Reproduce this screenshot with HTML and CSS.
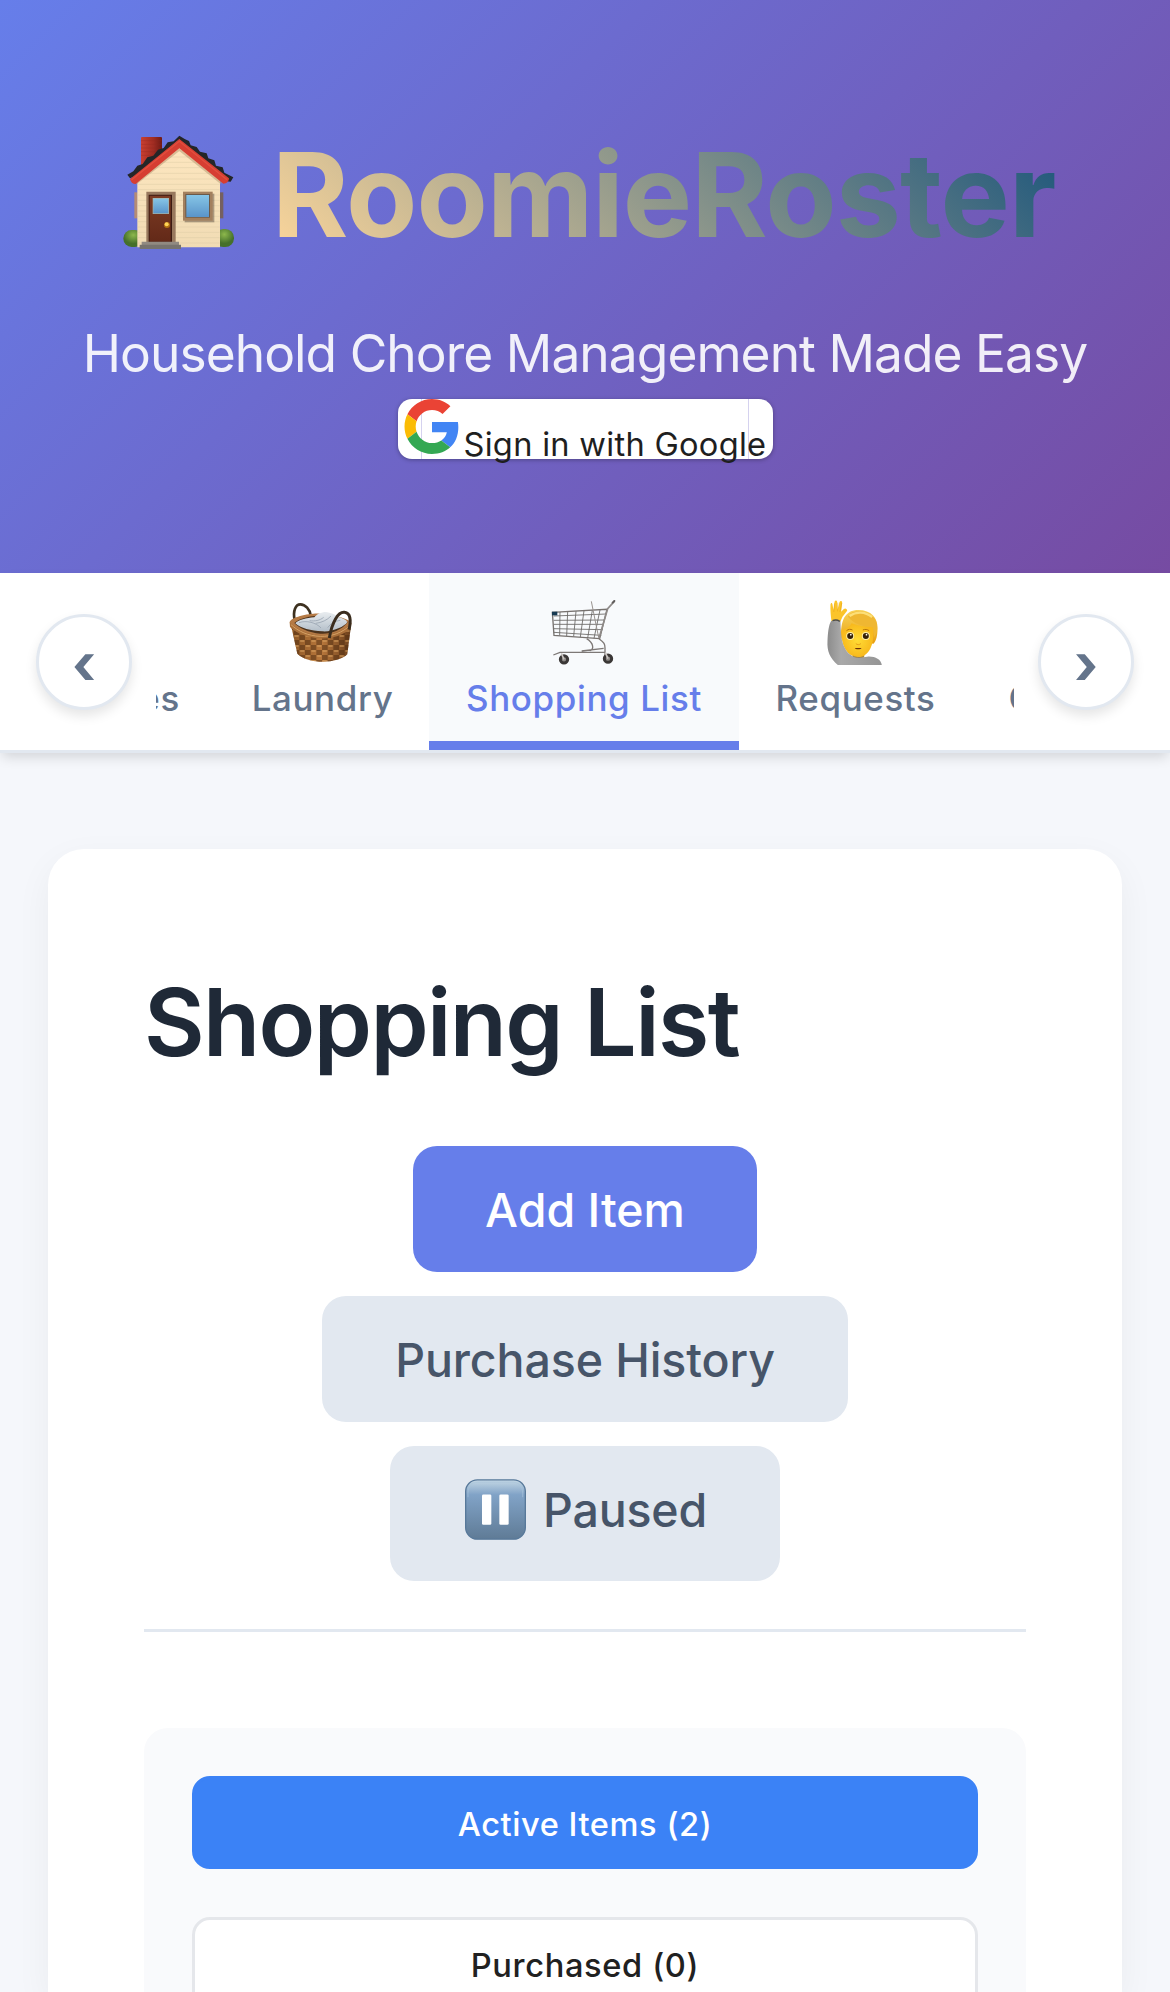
FILE: index.html
```
<!DOCTYPE html>
<html lang="en">
<head>
<meta charset="utf-8">
<title>RoomieRoster</title>
<link rel="stylesheet" href="styles.css">
</head>
<body>
<header class="header">
  <h1 class="brand">
    <svg class="brand-icon" viewBox="66 72 342 348">
      <defs>
        <linearGradient id="chimney"><stop offset="0" stop-color="#c93f31"/><stop offset=".6" stop-color="#a02c22"/><stop offset="1" stop-color="#6f1a14"/></linearGradient>
        <linearGradient id="siding" x2="0" y2="1"><stop offset="0" stop-color="#fde6bf"/><stop offset="1" stop-color="#f1dcb4"/></linearGradient>
        <linearGradient id="glass" x2="0" y2="1"><stop offset="0" stop-color="#86c5e6"/><stop offset="1" stop-color="#5a94c9"/></linearGradient>
        <linearGradient id="door" x2="0" y2="1"><stop offset="0" stop-color="#7d3c24"/><stop offset="1" stop-color="#632918"/></linearGradient>
        <radialGradient id="bush" cy=".3"><stop offset="0" stop-color="#8db84c"/><stop offset="1" stop-color="#45702b"/></radialGradient>
      </defs>
      <rect x="123" y="81" width="63" height="90" rx="3" fill="url(#chimney)"/>
      <path d="M123 92h63M123 103h63M123 114h63M123 125h63M123 136h63" stroke="#8e281f" stroke-width="1.5" opacity=".6"/>
      <path d="M103 247h10v78h-10z" fill="#b58c74"/><path d="M360 247h10v78h-10z" fill="#75605f"/>
      <rect x="70" y="360" width="60" height="51" rx="25" fill="url(#bush)"/>
      <rect x="344" y="357" width="58" height="54" rx="26" fill="url(#bush)"/>
      <path d="M112 205L238 104l122 101v207H112z" fill="url(#siding)"/>
      <path d="M205 141h66M184 157h108M164 173h148M144 190h188M124 207h226M113 223h246M113 239h246M113 255h246M113 271h246M113 287h246M113 303h246M113 319h246M113 335h246M113 351h246M113 367h246M113 383h246M113 399h246" stroke="#dccaa5" stroke-width="1.5"/>
      <path d="M108 220L238 119l126 100" fill="none" stroke="#b99b74" stroke-width="7" opacity=".55"/>
      <path d="M82 194l18-10 12-17 16-5 14-20 18-5 14-18 17-5 12-17 18-3 17-17 16 10 13 6 5 13 18 5 10 14 20 5 5 15 18 6 5 16 20 5 5 16 27 14-8 13-18-2L238 88 112 196l-22 9z" fill="#242628"/>
      <path d="M90 207L238 87l149 118c0 9-7 16-17 16L238 115 107 222c-9 0-15-6-17-15z" fill="#d63e32"/>
      <path d="M94 210L238 94l143 115" fill="none" stroke="#e24f3e" stroke-width="4"/>
      <path d="M139 245h88v154h-88z" fill="#98785d"/><path d="M146 254h70v143h-70z" fill="#3d1b12"/>
      <path d="M149 257h63v138h-63z" fill="url(#door)"/><path d="M158 264h49v48h-49z" fill="#a8b4a5"/><path d="M160 266h45v44h-45z" fill="url(#glass)"/>
      <circle cx="201" cy="345" r="9" fill="#b37113"/><circle cx="200" cy="343" r="6" fill="#ffd457"/>
      <path d="M254 251h89v86h-89z" fill="#554439" opacity=".45"/><path d="M249 245h89v87h-89z" fill="#a3805e"/><path d="M256 252h74v71h-74z" fill="#6b5949"/><path d="M259 255h68v66h-68z" fill="url(#glass)"/>
      <path d="M125 395h112v10H125z" fill="#918a82"/><path d="M119 404h124v13H119z" fill="#77736e"/>
    </svg>
    <span class="brand-name">RoomieRoster</span>
  </h1>
  <p class="tagline">Household Chore Management Made Easy</p>
  <button class="google">
    <svg class="google-icon" viewBox="0 0 48 48">
      <path fill="#EA4335" d="M24 9.5c3.54 0 6.71 1.22 9.21 3.6l6.85-6.85C35.9 2.38 30.47 0 24 0 14.62 0 6.51 5.38 2.56 13.22l7.98 6.19C12.43 13.72 17.74 9.5 24 9.5z"/>
      <path fill="#4285F4" d="M46.98 24.55c0-1.57-.15-3.09-.38-4.55H24v9.02h12.94c-.58 2.96-2.26 5.48-4.78 7.18l7.73 6c4.51-4.18 7.09-10.36 7.09-17.65z"/>
      <path fill="#FBBC05" d="M10.53 28.59c-.48-1.45-.76-2.99-.76-4.59s.27-3.14.76-4.59l-7.98-6.19C.92 16.46 0 20.12 0 24c0 3.88.92 7.54 2.56 10.78l7.97-6.19z"/>
      <path fill="#34A853" d="M24 48c6.48 0 11.93-2.13 15.89-5.81l-7.73-6c-2.15 1.45-4.92 2.3-8.16 2.3-6.26 0-11.57-4.22-13.47-9.91l-7.98 6.19C6.51 42.62 14.62 48 24 48z"/>
    </svg>
    <span class="google-text">Sign in with Google</span>
  </button>
</header>

<nav class="nav">
  <button class="scroll">‹</button>
  <div class="tabs">
    <a class="tab tab-first"><span class="tab-icon"></span>Chores</a>
    <a class="tab tab-laundry">
      <svg class="tab-icon" viewBox="867 120 198 198">
        <defs>
          <linearGradient id="wicker"><stop offset="0" stop-color="#8e5826"/><stop offset=".5" stop-color="#b9783c"/><stop offset="1" stop-color="#6d401b"/></linearGradient>
          <pattern id="weave" width="34" height="30" patternUnits="userSpaceOnUse"><path d="M0 0h17v15H0zM17 15h17v15H17z" fill="#4c2a10" opacity=".5"/><path d="M19 3h13M2 18h13" stroke="#dba664" stroke-width="3"/></pattern>
          <linearGradient id="linen" x2="0" y2="1"><stop offset="0" stop-color="#e9edf0"/><stop offset="1" stop-color="#b4bfc9"/></linearGradient>
        </defs>
        <path d="M887 180c-6-28 3-47 17-47 15 0 29 16 31 33" fill="none" stroke="#3d3120" stroke-width="8"/>
        <path d="M872 187c4-16 60-28 90-26 35 2 90 14 95 28l-4 24c-30 20-140 18-176-8z" fill="#b57a45"/>
        <path d="M886 189c12-14 50-22 76-22 30 0 70 6 84 20-18 24-50 36-82 34-34-2-66-18-78-32z" fill="#4c321b"/>
        <path d="M889 190c8-10 34-16 57-18 8-11 30-20 45-14 12 2 20 7 25 12 14 4 25 8 29 16-8 14-45 30-75 28-34-1-66-10-81-24z" fill="url(#linen)"/>
        <path d="M900 188c22-8 52 0 66 16M932 182c15 2 30 0 42-10M950 190c18-2 35-10 46-22M986 203c8-12 22-20 38-22" fill="none" stroke="#9aa5b2" stroke-width="2.5"/>
        <path d="M878 205c35 28 130 34 177 0l-10 78c-30 30-118 30-150-2z" fill="url(#wicker)"/>
        <path d="M878 205c35 28 130 34 177 0l-10 78c-30 30-118 30-150-2z" fill="url(#weave)"/>
        <path d="M872 187c18 18 50 36 90 38 36 2 74-15 95-36l-2 17c-24 20-58 31-92 29-38-2-74-17-90-34z" fill="#a96f39"/>
        <path d="M876 194c22 20 52 34 88 35 36 1 66-12 90-33" fill="none" stroke="#d6a266" stroke-width="3"/>
        <path d="M991 234c8-47 26-80 46-77 17 2 20 23 13 52" fill="none" stroke="#3a2c1d" stroke-width="9"/>
      </svg>
      Laundry
    </a>
    <a class="tab tab-shopping tab-active">
      <svg class="tab-icon" viewBox="453 120 198 198" fill="none">
        <path d="M457 157l164-9-22 88-137-10z" stroke="#77726f" stroke-width="4"/>
        <path d="M461 168l158-6M461 181l154-1M461 193h151M461 206l147 3M461 217l143 9M480 156l-1 70M503 155l-3 73M528 154l-7 75M552 152l-11 79M577 151l-14 83M600 150l-18 85" stroke="#6b6866" stroke-width="2.6"/>
        <path d="M574 124l14 70 8 38" stroke="#99938f" stroke-width="3"/>
        <path d="M597 235l26-89 20-22" stroke="#8f8a88" stroke-width="5"/><path d="M638 128l5-5" stroke="#5f5c5b" stroke-width="6" stroke-linecap="round"/>
        <path d="M560 236c22 14 22 32 10 36M597 236c16 12 18 16 18 28v22M460 285l20-8h134M545 273l66-8" stroke="#7d7876" stroke-width="4"/>
        <path d="M456 155h16v11h-16z" fill="#173a52"/>
        <circle cx="492" cy="298" r="11" stroke="#3b3736" stroke-width="9" fill="#8f8b88"/><circle cx="624" cy="296" r="11" stroke="#3b3736" stroke-width="9" fill="#8f8b88"/>
        <path d="M484 280l8 18M616 278l8 18" stroke="#c9c4c1" stroke-width="5"/>
      </svg>
      Shopping List
    </a>
    <a class="tab tab-requests">
      <svg class="tab-icon" viewBox="127.5 120 198 198">
        <defs>
          <linearGradient id="hair" x2="0" y2="1"><stop offset="0" stop-color="#f9d45a"/><stop offset="1" stop-color="#e89f10"/></linearGradient>
          <radialGradient id="face"><stop offset="0" stop-color="#ffdc35"/><stop offset="1" stop-color="#f8b91c"/></radialGradient>
          <linearGradient id="sleeve"><stop offset="0" stop-color="#8c8c8c"/><stop offset=".25" stop-color="#a9a9a9"/><stop offset="1" stop-color="#959595"/></linearGradient>
        </defs>
        <path d="M182 236c-3-56 12-86 52-86 38 0 58 24 57 55 0 20-3 38-12 46z" fill="url(#hair)"/>
        <path d="M217 270h34v34h-34z" fill="#e8a517"/>
        <path d="M183 210c15-3 24-8 30-20 25 10 50 11 64 10 7 48-10 91-44 91-33 0-53-36-50-81z" fill="url(#face)"/>
        <path d="M202 170c16 20 46 30 76 32l3 30c11-12 12-38 3-54-12-18-30-25-50-24-16 1-27 6-32 16z" fill="#efb732"/>
        <path d="M207 168c20-14 46-14 68 3" fill="none" stroke="#ffe88a" stroke-width="7" opacity=".8"/>
        <circle cx="209" cy="228" r="12" fill="#fff0a8"/><circle cx="256" cy="228" r="12" fill="#fff0a8"/>
        <circle cx="209" cy="228" r="9" fill="#342007"/><circle cx="256" cy="228" r="9" fill="#342007"/><circle cx="211" cy="224" r="2.5" fill="#fff"/><circle cx="258" cy="224" r="2.5" fill="#fff"/>
        <path d="M198 212c6-5 12-5 18-2M247 210c6-3 14-2 19 2" fill="none" stroke="#b87508" stroke-width="3"/>
        <path d="M226 251c5 4 10 4 15 0" fill="none" stroke="#e6a01a" stroke-width="3"/><path d="M223 264h20c-1 5-19 5-20 0z" fill="#6b330a"/>
        <path d="M153 184c-2-16-4-36-3-50 1-7 5-7 6 0l3 16 3-24c2-6 7-6 8 0l1 23 6-23c3-5 8-3 8 2l-3 27 8-8c5-4 10 0 10 5l-14 18-7 16z" fill="#fbc42a"/>
        <path d="M160 156l2-26M171 154l1-26M178 156l6-27" stroke="#e69f16" stroke-width="1.5"/>
        <path d="M152 183c8-3 20-2 28 1 1 25 1 48 7 66 7 20 16 34 33 40 14 5 27 2 40 0 22-2 41 7 44 25H172c-24-20-33-42-31-72 1-22 3-48 11-60z" fill="url(#sleeve)"/>
        <path d="M156 182c7-3 16-2 22 2" fill="none" stroke="#4e4e4e" stroke-width="4"/><path d="M217 288c12 6 26 6 34 0" fill="none" stroke="#7a7263" stroke-width="2"/>
      </svg>
      Requests
    </a>
    <a class="tab tab-last"><span class="tab-icon"></span>Calendar</a>
  </div>
  <button class="scroll">›</button>
</nav>

<main class="main">
  <section class="card">
    <h2 class="title">Shopping List</h2>
    <div class="actions">
      <button class="btn btn-primary">Add Item</button>
      <button class="btn btn-history">Purchase History</button>
      <button class="btn btn-paused">
        <svg class="pause-icon" viewBox="75 146 183 182">
          <defs><linearGradient id="key" x2="0" y2="1"><stop offset="0" stop-color="#c5d8e5"/><stop offset=".25" stop-color="#81a3c7"/><stop offset="1" stop-color="#5f7b96"/></linearGradient></defs>
          <rect x="77" y="148" width="179" height="178" rx="35" fill="url(#key)" stroke="#58799a" stroke-width="4"/>
          <path d="M84 200v-12c0-20 10-33 30-33h104c20 0 30 13 30 33v12" fill="none" stroke="#a9c4db" stroke-width="3" opacity=".6"/>
          <rect x="126" y="192" width="28" height="91" rx="4" fill="#fff"/><rect x="178" y="192" width="28" height="91" rx="4" fill="#fff"/>
        </svg>
        Paused
      </button>
    </div>
    <div class="panel">
      <button class="filter filter-active">Active Items (2)</button>
      <button class="filter">Purchased (0)</button>
    </div>
  </section>
</main>
</body>
</html>
```
FILE: styles.css
```
* { box-sizing: border-box; }
body {
  margin: 0;
  height: 1992px;
  overflow: hidden;
  background: #f5f7fb;
  font-family: Inter, "Noto Sans", sans-serif;
}
button { font-family: inherit; margin: 0; padding: 0; border: 0; }

.header {
  height: 573px;
  padding-top: 123px;
  display: flex;
  flex-direction: column;
  align-items: center;
  background: linear-gradient(135deg, #667eea 0%, #764ba2 100%);
}
.brand {
  margin: 0;
  width: 926px;
  height: 143px;
  display: flex;
  gap: 36px;
  font-size: 116.5px;
  line-height: 143px;
  font-weight: 700;
  letter-spacing: -1px;
}
.brand-icon { width: 114px; height: 116px; margin-top: 11px; flex: none; }
.brand-name {
  background: linear-gradient(45deg, #ffd89b, #19547b);
  -webkit-background-clip: text;
  background-clip: text;
  color: transparent;
}
.tagline {
  margin: 47px 0 0;
  font-size: 51.5px;
  line-height: 80px;
  font-weight: 400;
  letter-spacing: -0.97px;
  color: rgba(255, 255, 255, 0.9);
  white-space: nowrap;
}
.google {
  margin-top: 6px;
  width: 375px;
  height: 60px;
  padding-left: 6px;
  display: flex;
  align-items: flex-start;
  gap: 4px;
  border-radius: 14px;
  background: linear-gradient(90deg, transparent 23px, #d5d2ef 23px 24px, transparent 24px 350px, #d5d2ef 350px 351px, transparent 351px) #fff;
  box-shadow: 0 1px 4px rgba(0, 0, 0, 0.3);
  color: #1f1f1f;
}
.google-icon { width: 56px; height: 55px; flex: none; }
.google-text {
  margin-top: 25px;
  font-size: 32.6px;
  line-height: 40px;
  letter-spacing: 0.29px;
  white-space: nowrap;
}

.nav {
  height: 180px;
  padding: 0 36px;
  display: flex;
  align-items: flex-start;
  gap: 24px;
  background: #fff;
  border-bottom: 3px solid #e2e8f0;
  box-shadow: 0 6px 12px -2px rgba(0, 0, 0, 0.14);
}
.scroll {
  flex: none;
  width: 96px;
  height: 96px;
  margin-top: 41px;
  display: flex;
  align-items: center;
  justify-content: center;
  padding-top: 4px;
  border: 3px solid #e2e8f0;
  border-radius: 50%;
  background: #fff;
  box-shadow: 0 6px 12px rgba(0, 0, 0, 0.1);
  color: #64748b;
  font-size: 56px;
  line-height: 56px;
  font-weight: 700;
}
.tabs { flex: 1; display: flex; overflow: hidden; height: 177px; }
.tab {
  flex: none;
  height: 177px;
  padding-top: 27px;
  display: flex;
  flex-direction: column;
  align-items: center;
  gap: 11px;
  border-bottom: 9px solid transparent;
  color: #64748b;
  font-size: 34.9px;
  line-height: 42px;
  font-weight: 500;
  letter-spacing: 0.65px;
  white-space: nowrap;
}
.tab-icon { display: block; width: 66px; height: 66px; }
.tab-first { width: 192px; margin-left: -132px; padding-right: 4px; }
.tab-laundry { width: 213px; }
.tab-laundry .tab-icon { margin-left: -3px; }
.tab-shopping { width: 310px; }
.tab-requests { width: 233px; }
.tab-last { width: 229px; }
.tab-active { background: #f8fafc; color: #667eea; border-bottom-color: #667eea; }

.main { padding: 96px 48px 0; }
.card {
  height: 1143px;
  padding: 96px 96px 0;
  border-radius: 36px 36px 0 0;
  background: #fff;
  box-shadow: 0 12px 36px rgba(0, 0, 0, 0.05);
}
.title {
  margin: 0 0 46px;
  padding-top: 1px;
  font-size: 93.3px;
  line-height: 154px;
  font-weight: 600;
  letter-spacing: -1.6px;
  color: #1f2937;
}
.actions {
  display: flex;
  flex-direction: column;
  align-items: center;
  gap: 24px;
  padding-bottom: 48px;
  border-bottom: 3px solid #e2e8f0;
}
.btn {
  height: 126px;
  padding-top: 2px;
  display: flex;
  align-items: center;
  justify-content: center;
  border-radius: 24px;
  background: #e2e8f0;
  color: #475569;
  font-size: 46.5px;
  font-weight: 500;
}
.btn-primary { width: 344px; background: #667eea; color: #fff; }
.btn-history { width: 526px; letter-spacing: -0.1px; }
.btn-paused { width: 390px; height: 135px; padding: 0 0 7px 2px; gap: 17px; letter-spacing: -0.17px; }
.pause-icon { width: 61px; height: 61px; margin-top: -2px; }
.panel {
  height: 264px;
  margin-top: 96px;
  padding: 48px 48px 0;
  overflow: hidden;
  display: flex;
  flex-direction: column;
  gap: 48px;
  border-radius: 24px 24px 0 0;
  background: #f9fafc;
}
.filter {
  flex: none;
  height: 93px;
  padding-top: 3px;
  border: 3px solid #e5e7eb;
  border-radius: 18px;
  background: #fff;
  color: #212121;
  font-size: 32.6px;
  font-weight: 500;
  letter-spacing: 0.65px;
}
.filter-active { background: #3b82f6; border-color: #3b82f6; color: #fff; letter-spacing: 0.57px; }
```
